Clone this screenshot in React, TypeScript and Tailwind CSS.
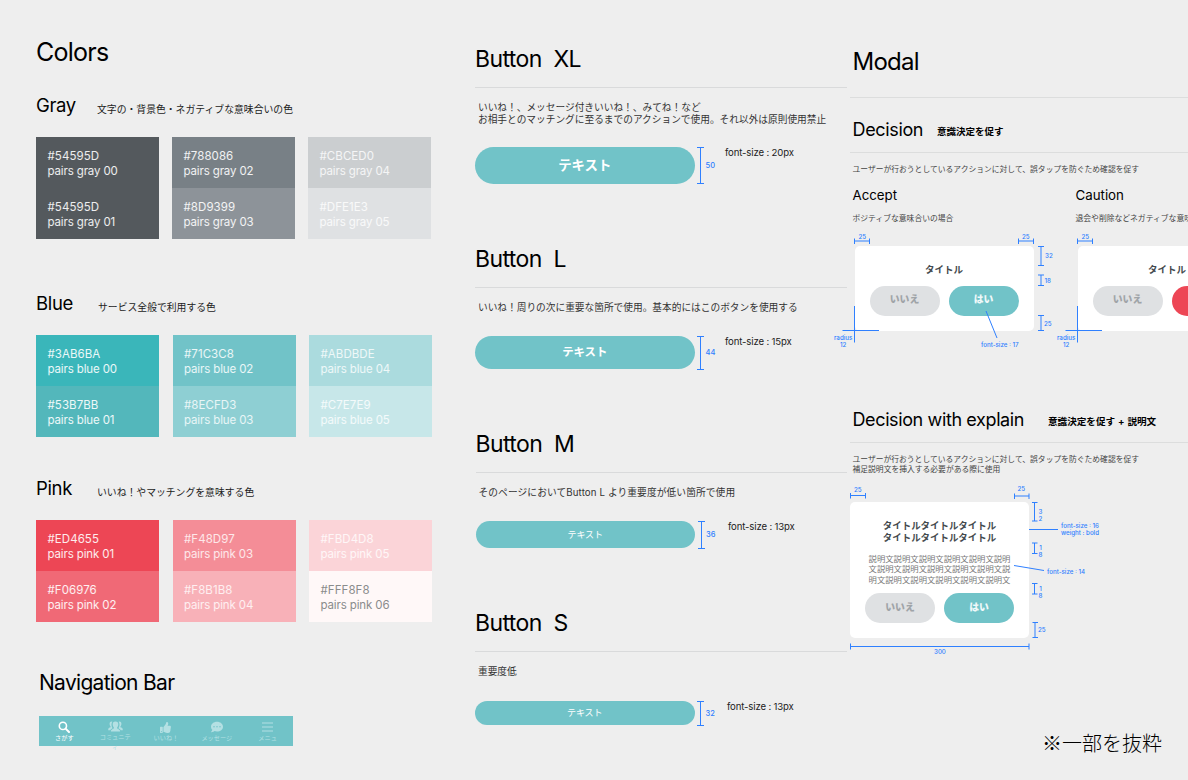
import type { ReactNode } from 'react'
import { FaCommentDots, FaThumbsUp } from 'react-icons/fa'

type Swatch = { hex: string; name: string; tile: string }

const gray: Swatch[][] = [
  [
    { hex: '#54595D', name: 'pairs gray 00', tile: 'bg-[#54595d] text-white/90' },
    { hex: '#54595D', name: 'pairs gray 01', tile: 'bg-[#54595d] text-white/90' },
  ],
  [
    { hex: '#788086', name: 'pairs gray 02', tile: 'bg-[#788086] text-white/90' },
    { hex: '#8D9399', name: 'pairs gray 03', tile: 'bg-[#8d9399] text-white/90' },
  ],
  [
    { hex: '#CBCED0', name: 'pairs gray 04', tile: 'bg-[#cbced0] text-white/80' },
    { hex: '#DFE1E3', name: 'pairs gray 05', tile: 'bg-[#dfe1e3] text-white/80' },
  ],
]

const blue: Swatch[][] = [
  [
    { hex: '#3AB6BA', name: 'pairs blue 00', tile: 'bg-[#3ab6ba] text-white/90' },
    { hex: '#53B7BB', name: 'pairs blue 01', tile: 'bg-[#53b7bb] text-white/90' },
  ],
  [
    { hex: '#71C3C8', name: 'pairs blue 02', tile: 'bg-[#71c3c8] text-white/85' },
    { hex: '#8ECFD3', name: 'pairs blue 03', tile: 'bg-[#8ecfd3] text-white/80' },
  ],
  [
    { hex: '#ABDBDE', name: 'pairs blue 04', tile: 'bg-[#abdbde] text-white/80' },
    { hex: '#C7E7E9', name: 'pairs blue 05', tile: 'bg-[#c7e7e9] text-white/80' },
  ],
]

const pink: Swatch[][] = [
  [
    { hex: '#ED4655', name: 'pairs pink 01', tile: 'bg-[#ed4655] text-white/90' },
    { hex: '#F06976', name: 'pairs pink 02', tile: 'bg-[#f06976] text-white/90' },
  ],
  [
    { hex: '#F48D97', name: 'pairs pink 03', tile: 'bg-[#f48d97] text-white/80' },
    { hex: '#F8B1B8', name: 'pairs pink 04', tile: 'bg-[#f8b1b8] text-white/80' },
  ],
  [
    { hex: '#FBD4D8', name: 'pairs pink 05', tile: 'bg-[#fbd4d8] text-white/80' },
    { hex: '#FFF8F8', name: 'pairs pink 06', tile: 'bg-[#fff8f8] text-[#8a8c8c]' },
  ],
]

function Palette({ title, note, noteClass, gap, swatches }: { title: string; note: string; noteClass: string; gap: string; swatches: Swatch[][] }) {
  return (
    <section>
      <div className="flex h-6">
        <h2 className="w-[61px] text-[18.5px] leading-6 tracking-[-0.35px] text-black">{title}</h2>
        <p className={`pt-[7px] text-[9.84px] leading-[18px] text-[#222] ${noteClass}`}>{note}</p>
      </div>
      <div className={`mt-5 flex ${gap}`}>
        {swatches.map((column) => (
          <div key={column[0].name} className="w-[123px]">
            {column.map((s) => (
              <div key={s.name} className={`h-[51px] pt-3 pl-[11.5px] text-[11.5px] leading-[14.5px] ${s.tile}`}>
                <p className="tracking-[0.06px]">{s.hex}</p>
                <p className="tracking-[-0.13px]">{s.name}</p>
              </div>
            ))}
          </div>
        ))}
      </div>
    </section>
  )
}

function SearchIcon() {
  return (
    <svg viewBox="0 0 12 12" className="size-3 text-white" fill="none" stroke="currentColor">
      <circle cx="4.9" cy="4.9" r="3.6" strokeWidth="1.6" />
      <path d="M7.6 7.6 11 11" strokeWidth="2" strokeLinecap="round" />
    </svg>
  )
}

function CommunityIcon() {
  return (
    <svg viewBox="0 0 15 11" className="h-[11px] w-[15px]" fill="currentColor">
      <path d="M3.6.6C2.1.6 1.5 1.7 1.6 3.1c.05 1.1.5 1.9 1 2.3 0 .6-.1.9-.8 1.2C.8 7 .2 7.500.2 9.200h2.200c.2-1 1-1.500 2.200-2C3.900 6.300 3.500 5 3.500 3.500c0-1.100.3-2 .9-2.700Z" />
      <path d="M11.4.6c1.5 0 2.1 1.1 2 2.500-.05 1.100-.5 1.900-1 2.300 0 .6.1.9.8 1.200 1 .4 1.600.9 1.600 2.600h-2.200c-.2-1-1-1.500-2.200-2 .7-.9 1.100-2.200 1.100-3.700 0-1.100-.3-2-.9-2.700Z" />
      <path d="M7.500.5c2 0 2.900 1.300 2.800 3.100-.1 1.300-.6 2.300-1.200 2.900 0 .8.2 1.100 1.100 1.400 1.200.5 1.900 1 1.900 2.600H2.900c0-1.600.7-2.100 1.900-2.600.9-.3 1.100-.6 1.100-1.400-.6-.6-1.100-1.600-1.200-2.900C4.600 1.800 5.500.5 7.500.5Z" />
    </svg>
  )
}

function MenuIcon() {
  return (
    <svg viewBox="0 0 11 10" className="h-[10px] w-[11px]" stroke="currentColor" strokeWidth="1.2">
      <path d="M0 1h11M0 5h11M0 9h11" />
    </svg>
  )
}

function NavItem({ icon, children, active }: { icon: ReactNode; children: ReactNode; active?: boolean }) {
  return (
    <div className={`flex flex-1 flex-col items-center pt-[5px] ${active ? 'text-white' : 'text-[#b4e0e3]'}`}>
      <div className="flex h-3 items-center">{icon}</div>
      <p className="text-center text-[6.2px] leading-[10px] whitespace-nowrap">{children}</p>
    </div>
  )
}

function ColorColumn() {
  return (
    <div className="w-[439px] shrink-0 pt-[37px]">
      <h1 className="h-[30px] text-[25px] leading-[30px] tracking-[-0.75px] text-black">Colors</h1>
      <div className="mt-[26px] flex flex-col">
        <Palette title="Gray" note="文字の・背景色・ネガティブな意味合いの色" noteClass="" gap="gap-[13px]" swatches={gray} />
        <div className="mt-[52px]">
          <Palette title="Blue" note="サービス全般で利用する色" noteClass="pl-px" gap="gap-[13.5px]" swatches={blue} />
        </div>
        <div className="mt-[39px]">
          <Palette title="Pink" note="いいね！やマッチングを意味する色" noteClass="" gap="gap-[13.5px]" swatches={pink} />
        </div>
      </div>
      <div className="mt-[47px] ml-[3px]">
        <h2 className="h-7 text-[21px] leading-7 tracking-[-0.7px] text-black">Navigation Bar</h2>
        <nav className="mt-[19px] flex h-[30px] w-[254px] bg-[#71c3c8]">
          <NavItem active icon={<SearchIcon />}>さがす</NavItem>
          <NavItem icon={<CommunityIcon />}>コミュニテ<br />ィ</NavItem>
          <NavItem icon={<FaThumbsUp className="size-[11px]" />}>いいね！</NavItem>
          <NavItem icon={<FaCommentDots className="size-3" />}>メッセージ</NavItem>
          <NavItem icon={<MenuIcon />}>メニュ</NavItem>
        </nav>
      </div>
    </div>
  )
}

function ButtonSpec({ title, rule, note, noteBox, button, label, bar, value, size, sizeClass, className }: {
  title: string; rule: string; note: ReactNode; noteBox: string; button: string; label: string; bar: string; value: string; size: string; sizeClass: string; className: string
}) {
  return (
    <section className={className}>
      <h1 className="h-7 text-[23px] leading-7 tracking-[-0.6px] whitespace-pre text-black">{title}</h1>
      <div className={`border-t border-[#d9dadb] ${rule}`} />
      <p className={`pl-[3px] text-[9.7px] leading-3 whitespace-nowrap text-[#333] ${noteBox}`}>{note}</p>
      <div className="flex items-start">
        <button className={`w-[219.5px] shrink-0 rounded-full bg-[#71c3c8] text-white ${button}`}>{label}</button>
        <div className={`ml-[2.5px] w-[7px] shrink-0 border-y border-[#2f80ff] ${bar}`}>
          <div className="mx-auto h-full w-px bg-[#2f80ff]" />
        </div>
        <div className={`flex w-3 items-center pl-[1.5px] text-[7.5px] font-medium text-[#2f80ff] ${bar}`}>{value}</div>
        <p className={`text-[9.6px] leading-3 tracking-[-0.15px] whitespace-nowrap text-[#222] ${sizeClass}`}>{size}</p>
      </div>
    </section>
  )
}

function ButtonColumn() {
  return (
    <div className="w-[372px] shrink-0 pt-[45px]">
      <ButtonSpec className="h-[200px]" title="Button  XL" rule="mt-[14px]"
        note={<>いいね！、メッセージ付きいいね！、みてね！など<br />お相手とのマッチングに至るまでのアクションで使用。それ以外は原則使用禁止</>}
        noteBox="mt-[14px] mb-[21px]" button="h-[37px] text-[13.4px] font-bold" label="テキスト" bar="h-[37px]" value="50" size="font-size : 20px" sizeClass="ml-[9px]" />
      <ButtonSpec className="h-[185px]" title="Button  L" rule="mt-[14px]"
        note="いいね！周りの次に重要な箇所で使用。基本的にはこのボタンを使用する"
        noteBox="mt-[14px] mb-[22px]" button="h-[33px] text-[11.4px] font-bold" label="テキスト" bar="h-[34px]" value="44" size="font-size : 15px" sizeClass="ml-[9px]" />
      <ButtonSpec className="h-[179px] pl-[0.5px]" title="Button  M" rule="mt-[14px]"
        note="そのページにおいてButton L より重要度が低い箇所で使用"
        noteBox="mt-[14px] mb-[22px] tracking-[0.12px]" button="h-[27px] text-[9px]" label="テキスト" bar="h-[28px]" value="36" size="font-size : 13px" sizeClass="ml-[11.5px]" />
      <ButtonSpec className="h-[130px]" title="Button  S" rule="mt-[14px]"
        note="重要度低"
        noteBox="mt-[14px] mb-[23px]" button="h-[24px] text-[9px]" label="テキスト" bar="h-[25px]" value="32" size="font-size : 13px" sizeClass="ml-[11px]" />
    </div>
  )
}

function Note({ className, children }: { className: string; children: ReactNode }) {
  return <span className={`absolute text-center text-[6.2px] leading-[7px] font-medium whitespace-nowrap text-[#2f80ff] ${className}`}>{children}</span>
}

function DialogButtons({ accept }: { accept: string }) {
  return (
    <div className="flex gap-[9px] text-[9.8px] font-black">
      <button className="h-[29.5px] w-[70px] rounded-full bg-[#dfe1e3] text-[#9fa4a8]">いいえ</button>
      <button className={`h-[29.5px] w-[70px] rounded-full text-white/90 ${accept}`}>はい</button>
    </div>
  )
}

function DecisionDialog({ accept, detailed }: { accept: string; detailed?: boolean }) {
  return (
    <div className="relative w-[223px] shrink-0 pt-4 pl-[4.5px]">
      <div className="h-[84.5px] w-[179px] rounded-[5px] bg-white px-[15px] pt-[17px]">
        <p className="mb-[9px] text-center text-[9.5px] leading-[14px] font-bold text-[#444a4e]">タイトル</p>
        <DialogButtons accept={accept} />
      </div>
      <svg className="absolute -left-4 top-0 h-[120px] w-[239px] overflow-visible" viewBox="834 230 239 120" fill="none" stroke="#2f80ff">
        <path d="M854.5 241H869.5M854.5 238.5V244M869.5 238.5V244" />
        {detailed && (
          <path d="M1018.5 241H1033.5M1018.5 238.5V244M1033.5 238.5V244M1041 246.5V265.5M1038 246.5H1044M1038 265.5H1044M1041 275V285.5M1038 275H1044M1038 285.5H1044M1041 315.5V330.5M1038 315.5H1044M1038 330.5H1044M986 311L997 338" />
        )}
        <path d="M854.5 306V342.5M842.5 330.5H879" />
      </svg>
      <Note className="top-[3px] left-[8.5px]">25</Note>
      {detailed && (
        <>
          <Note className="top-[3px] left-[172px]">25</Note>
          <Note className="top-[22px] left-[195px]">32</Note>
          <Note className="top-[47px] left-[194.5px]">18</Note>
          <Note className="top-[90px] left-[194px]">25</Note>
          <Note className="top-[111px] left-[131px]">font-size : 17</Note>
        </>
      )}
      <Note className="top-[103.5px] -left-4">radius<br />12</Note>
    </div>
  )
}

function ExplainDialog() {
  return (
    <div className="relative h-[180px] pt-4">
      <div className="h-[135.5px] w-[179px] rounded-[5px] bg-white px-[15px] pt-[18px] text-center">
        <p className="text-[9.45px] leading-[12px] font-bold text-[#444a4e]">
          タイトルタイトルタイトル
          <br />
          タイトルタイトルタイトル
        </p>
        <p className="mt-[9.5px] mb-[7.5px] text-[8.35px] leading-[10.7px] whitespace-nowrap text-[#777]">
          説明文説明文説明文説明文説明文説明
          <br />
          文説明文説明文説明文説明文説明文説
          <br />
          明文説明文説明文説明文説明文説明文
        </p>
        <DialogButtons accept="bg-[#71c3c8]" />
      </div>
      <svg className="absolute top-0 left-0 h-[180px] w-[260px] overflow-visible" viewBox="850 486 260 180" fill="none" stroke="#2f80ff">
        <path d="M850.5 495.5H865.5M850.5 493V498.5M865.5 493V498.5M1014.5 496H1029M1014.5 493.5V499M1029 493.5V499" />
        <path d="M1034.5 502.5V521M1032 502.5H1037.5M1032 521H1037.5M1034.5 543V553.5M1032 543H1037.5M1032 553.5H1037.5M1034.5 583.5V594M1032 583.5H1037.5M1032 594H1037.5M1035 622.5V637.5M1032.5 622.5H1038M1032.5 637.5H1038" />
        <path d="M1029 529.5H1058M1014 565.5L1044 570.5M850.5 646.5H1029M850.5 643.5V649.5M1029 643.5V649.5" />
      </svg>
      <Note className="top-0 left-1">25</Note>
      <Note className="-top-px left-[167.5px]">25</Note>
      <Note className="top-[22px] left-[188.5px]">3<br />2</Note>
      <Note className="top-[58px] left-[188.5px]">1<br />8</Note>
      <Note className="top-[99px] left-[188.5px]">1<br />8</Note>
      <Note className="top-[140px] left-[188px]">25</Note>
      <Note className="top-[36px] left-[211px]">font-size : 16<br />weight : bold</Note>
      <Note className="top-[81.5px] left-[197px]">font-size : 14</Note>
      <Note className="top-[161.5px] left-[84px]">300</Note>
    </div>
  )
}

function ModalColumn() {
  return (
    <div className="flex w-[341px] shrink-0 flex-col pt-[47px] pl-[3px]">
      <h1 className="h-[30px] pl-[2.5px] text-[24px] leading-[30px] tracking-[-0.75px] text-black">Modal</h1>
      <div className="mt-[20px] border-t border-[#dcdddd]" />
      <div className="mt-[20px] flex h-6 pl-[2.5px]">
        <h2 className="w-[84.5px] text-[18px] leading-6 tracking-[-0.35px] text-black">Decision</h2>
        <p className="pt-[2px] text-[9.5px] leading-6 font-bold text-black">意識決定を促す</p>
      </div>
      <div className="mt-[10px] border-t border-[#dcdddd]" />
      <p className="mt-[10px] pl-[2.5px] text-[7.79px] leading-3 whitespace-nowrap text-[#444]">ユーザーが行おうとしているアクションに対して、誤タップを防ぐため確認を促す</p>
      <div className="mt-[10px] flex">
        <div className="w-[223px] shrink-0 pl-[2.5px]">
          <h3 className="text-[13.3px] leading-5 text-black">Accept</h3>
          <p className="mt-[7px] text-[7.8px] leading-3 text-[#444]">ポジティブな意味合いの場合</p>
        </div>
        <div className="shrink-0 pl-[2.5px]">
          <h3 className="text-[13.3px] leading-5 text-black">Caution</h3>
          <p className="mt-[7px] text-[7.8px] leading-3 whitespace-nowrap text-[#444]">退会や削除などネガティブな意味合いの場合</p>
        </div>
      </div>
      <div className="mt-[6px] flex h-[120px]">
        <DecisionDialog accept="bg-[#71c3c8]" detailed />
        <DecisionDialog accept="bg-[#ed4655]" />
      </div>
      <div className="mt-[58px] flex h-6 pl-[2.5px]">
        <h2 className="w-[195.5px] text-[18px] leading-6 tracking-[-0.38px] whitespace-nowrap text-black">Decision with explain</h2>
        <p className="pt-[2px] text-[9.6px] leading-6 font-bold [word-spacing:0.6px] whitespace-nowrap text-black">意識決定を促す + 説明文</p>
      </div>
      <div className="mt-[10px] border-t border-[#dcdddd]" />
      <p className="mt-[11px] mb-[12px] pl-[2.5px] text-[7.79px] leading-[10px] whitespace-nowrap text-[#444]">
        ユーザーが行おうとしているアクションに対して、誤タップを防ぐため確認を促す
        <br />
        補足説明文を挿入する必要がある際に使用
      </p>
      <ExplainDialog />
      <p className="mt-[62px] mr-[26px] text-right font-['Noto_Sans_CJK_JP',sans-serif] text-[20px] leading-[30px] font-light text-black">※一部を抜粋</p>
    </div>
  )
}

export default function App() {
  return (
    <main className="flex h-[780px] w-[1188px] overflow-hidden bg-[#eee] pl-9 font-['Inter','Noto_Sans_CJK_JP',sans-serif]">
      <ColorColumn />
      <ButtonColumn />
      <ModalColumn />
    </main>
  )
}
